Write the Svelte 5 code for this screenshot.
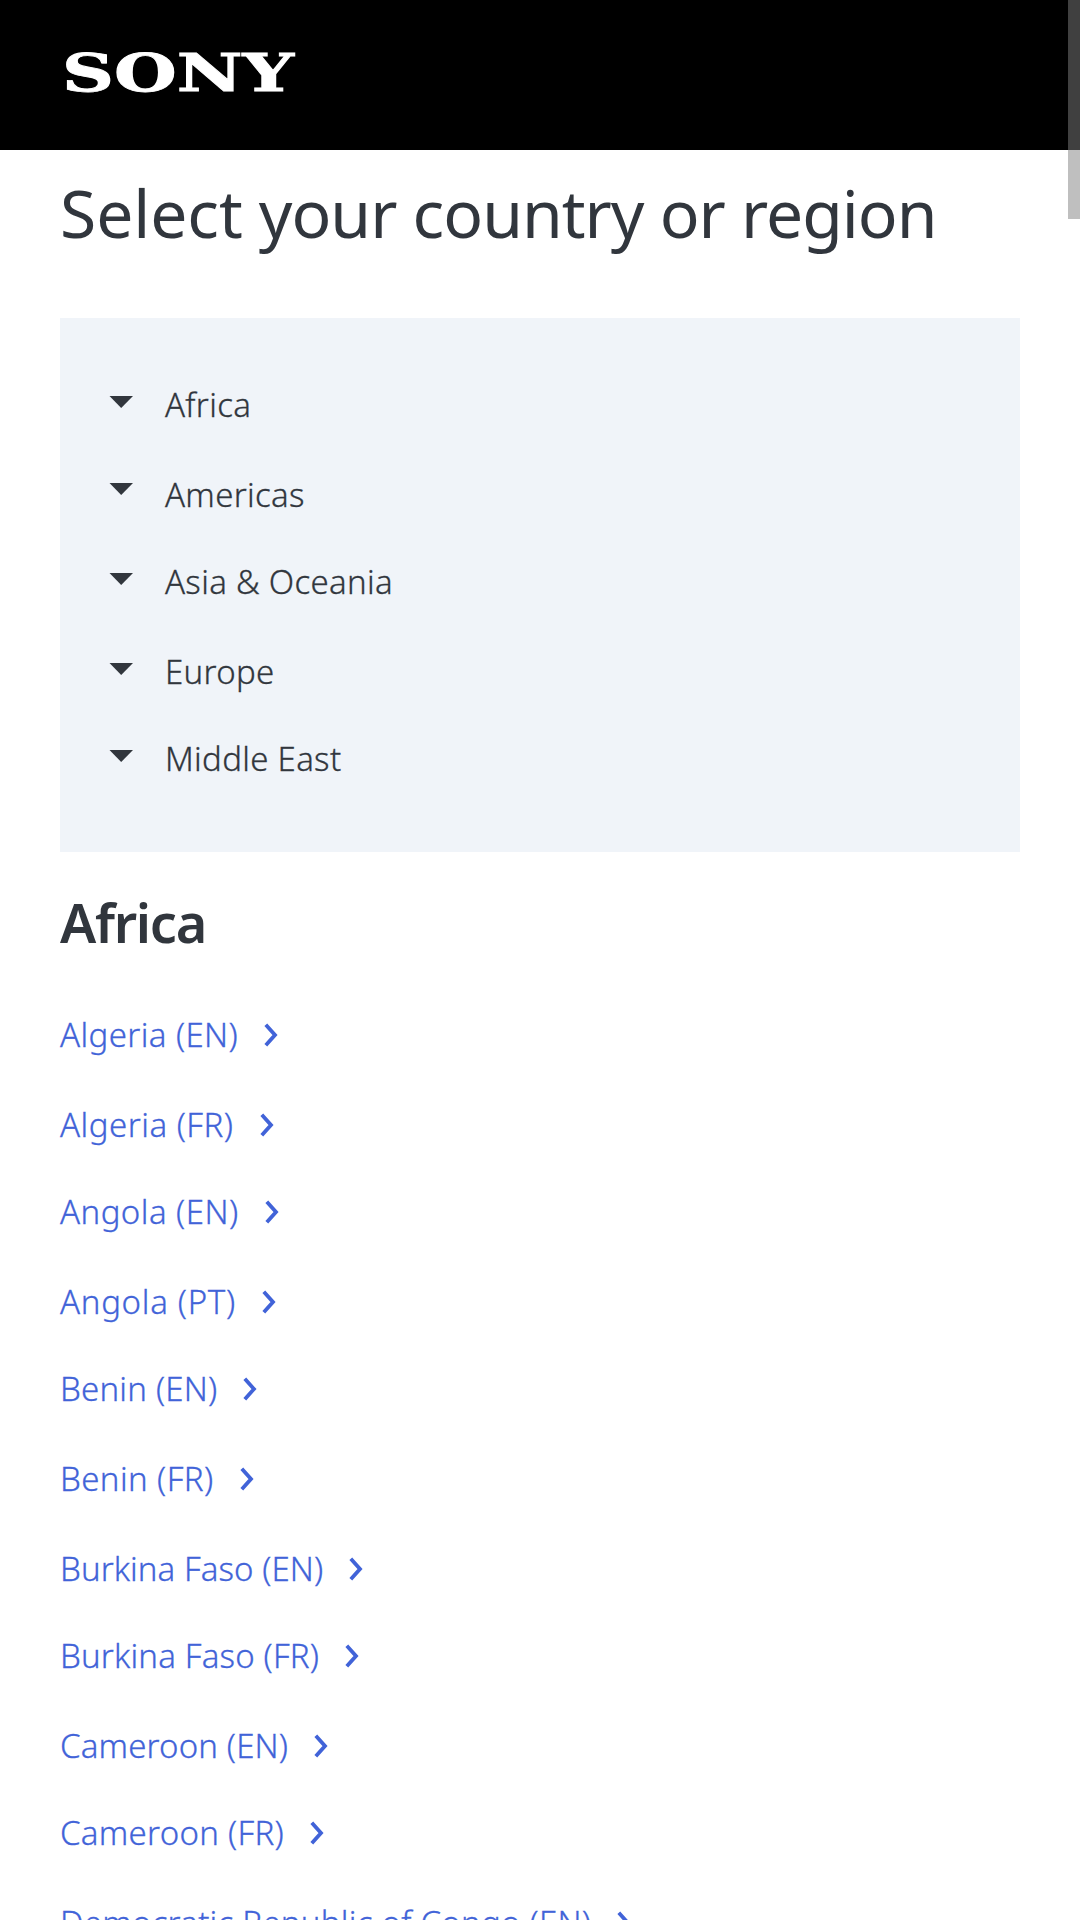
<script lang="ts">
	interface Link {
		name: string;
		lang: string;
		tracking: number;
	}

	const regions = ["Africa", "Americas", "Asia & Oceania", "Europe", "Middle East"];

	// tracking is the letter spacing in px
	const countries: Link[] = [
		{ name: "Algeria", lang: "EN", tracking: 0.4 },
		{ name: "Algeria", lang: "FR", tracking: 0.5 },
		{ name: "Angola", lang: "EN", tracking: 0.45 },
		{ name: "Angola", lang: "PT", tracking: 0.7 },
		{ name: "Benin", lang: "EN", tracking: 0.2 },
		{ name: "Benin", lang: "FR", tracking: 0.4 },
		{ name: "Burkina Faso", lang: "EN", tracking: 0.07 },
		{ name: "Burkina Faso", lang: "FR", tracking: 0.17 },
		{ name: "Cameroon", lang: "EN", tracking: 0.15 },
		{ name: "Cameroon", lang: "FR", tracking: 0.28 },
		{ name: "Democratic Republic of Congo", lang: "EN", tracking: 0.25 },
	];
</script>

<div class="page">
	<header class="header">
		<svg class="logo" width="260" height="80" viewBox="0 0 260 80" role="img" aria-label="Sony">
			<text x="10" y="59.5" textLength="232" lengthAdjust="spacingAndGlyphs">SONY</text>
		</svg>
	</header>

	<main class="content">
		<h1><span class="lead">Select</span> your country or region</h1>

		<nav class="regions">
			{#each regions as region}
				<a class="row region" href="#{region}">
					<svg class="caret" width="24" height="12" viewBox="0 0 24 12">
						<path d="M0.5 0H24L12.2 12Z" fill="currentColor" />
					</svg>
					<span>{region}</span>
				</a>
			{/each}
		</nav>

		<h2 id="Africa">Africa</h2>

		<div class="countries">
			{#each countries as { name, lang, tracking }}
				<a class="row country" href="#{name}-{lang}">
					<span style={`letter-spacing: ${tracking}px`}>{name} ({lang})</span>
					<svg class="chevron" width="14" height="24" viewBox="0 0 14 24">
						<path d="M1.8 1.8L11 12L1.8 22.2" fill="none" stroke="currentColor" stroke-width="3.8" />
					</svg>
				</a>
			{/each}
		</div>
	</main>

	<div class="scrollbar"></div>
</div>

<style>
	:global(body) {
		background: #fff;
	}

	.page {
		position: relative;
		height: 1920px;
		overflow: hidden;
		color: #31363d;
		font-family: "Noto Sans", sans-serif;
	}

	.header {
		box-sizing: border-box;
		height: 150px;
		padding: 31px 0 0 52px;
		background: #000;
	}

	.logo {
		display: block;
		fill: #fff;
		stroke: #fff;
		stroke-width: 0.9px;
		font: bold 52px "DejaVu Serif", serif;
	}

	.content {
		padding: 0 60px;
	}

	h1 {
		height: 168px;
		margin: 0;
		font-size: 66px;
		font-weight: 400;
		line-height: 124px;
		letter-spacing: -1px;
		white-space: nowrap;
	}

	.lead {
		letter-spacing: -0.1px;
	}

	.regions {
		box-sizing: border-box;
		height: 534px;
		padding: 42px 48px;
		background: #f0f4f9;
	}

	.row {
		display: flex;
		align-items: flex-start;
		height: 90px;
		font-size: 33px;
		font-weight: 300;
		line-height: 90px;
		text-decoration: none;
		white-space: nowrap;
		-webkit-text-stroke: 0.3px currentColor;
	}

	.row:nth-child(2),
	.row:nth-child(4),
	.row:nth-child(7),
	.row:nth-child(9) {
		height: 87px;
	}

	.region {
		gap: 32px;
		color: inherit;
		letter-spacing: 0.3px;
	}

	.caret {
		margin: 36px 0 0 1px;
	}

	.region:nth-child(2) .caret {
		margin-top: 33px;
	}

	h2 {
		height: 138px;
		margin: 0;
		font-size: 54px;
		font-weight: 600;
		line-height: 140px;
		letter-spacing: -1.3px;
	}

	.country {
		gap: 26px;
		color: #4163d8;
	}

	.chevron {
		margin-top: 33px;
	}

	.scrollbar {
		position: absolute;
		top: 0;
		right: 0;
		width: 12px;
		height: 219px;
		background: rgba(128, 128, 128, 0.5);
	}
</style>
